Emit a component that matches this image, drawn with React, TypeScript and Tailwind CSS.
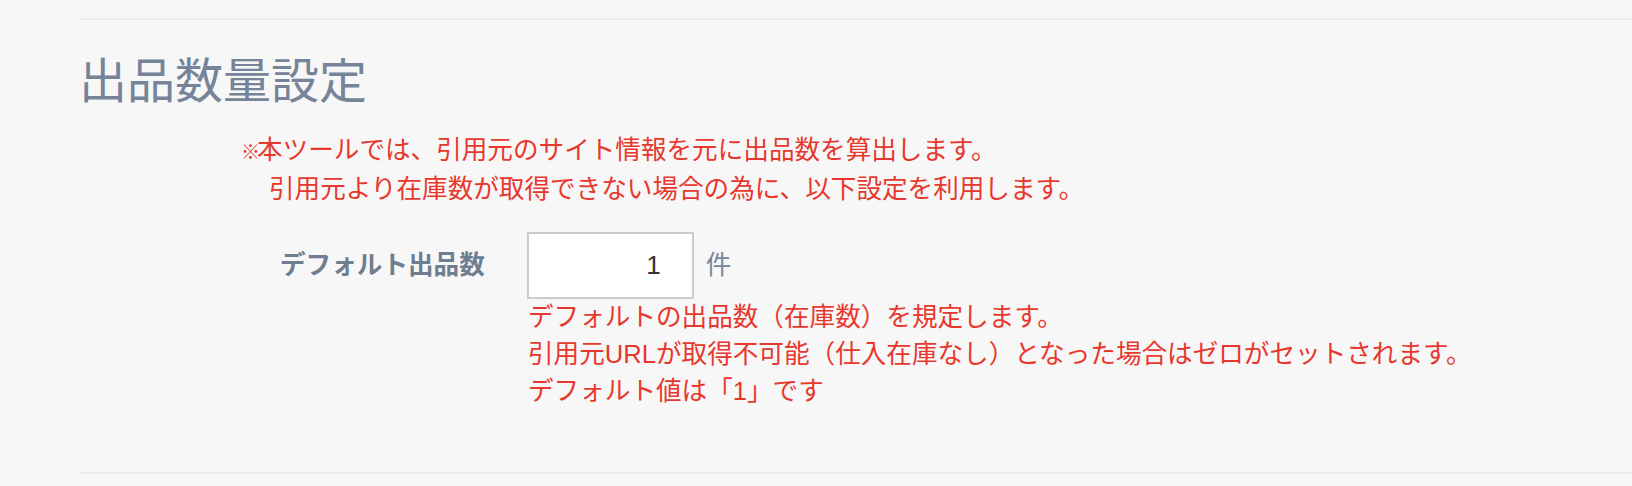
const font = "font-['Liberation_Sans','Noto_Sans_CJK_JP',sans-serif]";

const notes = [
  "デフォルトの出品数（在庫数）を規定します。",
  "引用元URLが取得不可能（仕入在庫なし）となった場合はゼロがセットされます。",
  "デフォルト値は「1」です",
];

export default function App() {
  return (
    <div className={`min-h-screen bg-[#f7f7f7] pl-[79px] pt-[18px] ${font}`}>
      <div className="border-t-2 border-[#ececec]">
        {/* 見出し */}
        <h2 className="mt-[38px] text-[48px] leading-none text-[#768499]">出品数量設定</h2>

        {/* 注意書き */}
        <div className="mt-[26px] ml-[162px] text-[25.6px] leading-[36px] text-[#e8372d]">
          <p>
            <span className="inline-block w-[16px] text-[19px] font-bold">※</span>本ツールでは、引用元のサイト情報を元に出品数を算出します。
          </p>
          <p className="pl-[28px]">引用元より在庫数が取得できない場合の為に、以下設定を利用します。</p>
        </div>

        {/* デフォルト出品数 */}
        <div className="mt-[25px] flex items-center">
          <label className="ml-[201px] text-[25.6px] font-bold text-[#6f7d91]">デフォルト出品数</label>
          <input
            type="text"
            defaultValue="1"
            className="ml-[42px] h-[67px] w-[167px] border-2 border-[#cccccc] bg-white pr-[31px] text-right text-[26px] text-[#333333] outline-none"
          />
          <span className="ml-[12px] text-[25.6px] text-[#768499]">件</span>
        </div>
        <div className="ml-[449px] text-[25.6px] leading-[37px] text-[#e8372d]">
          {notes.map((n) => (
            <p key={n}>{n}</p>
          ))}
        </div>
      </div>
      <div className="mt-[62px] border-t-2 border-[#ececec]" />
    </div>
  );
}
